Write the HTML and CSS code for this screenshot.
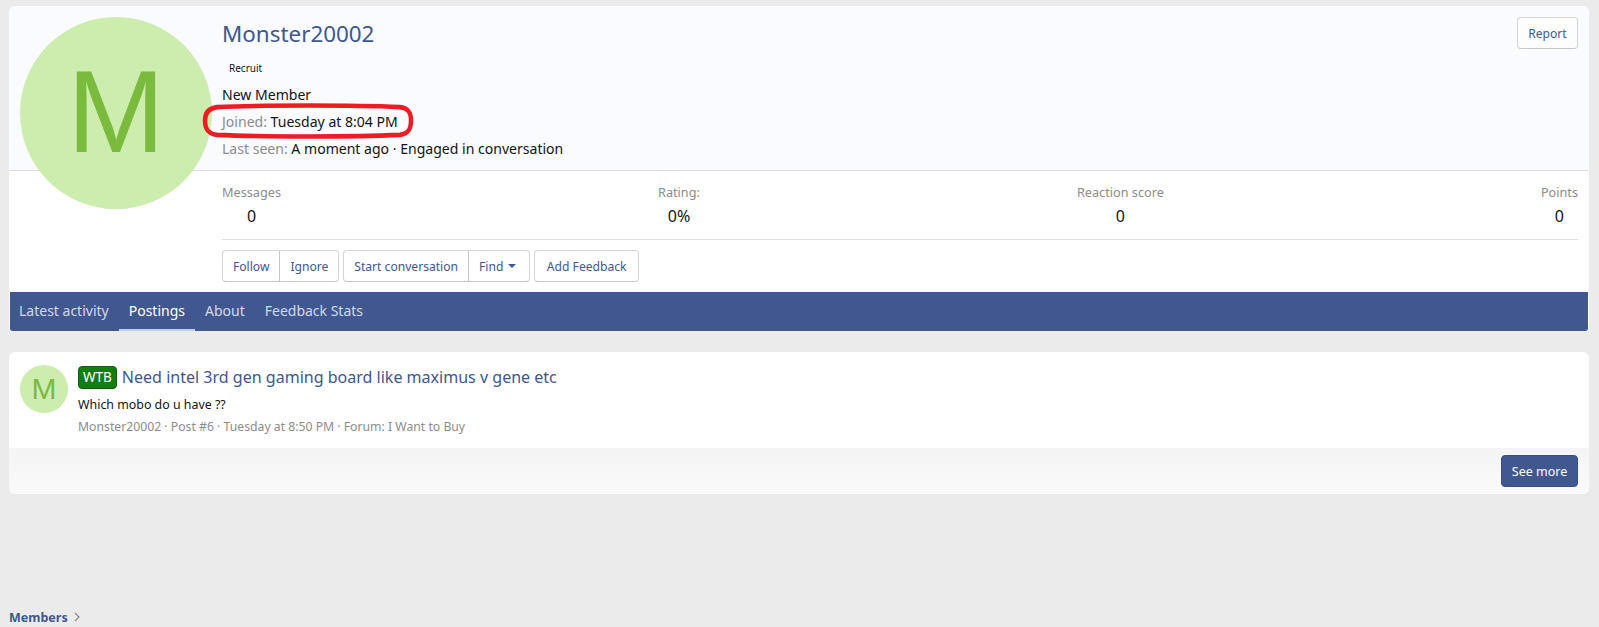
FILE: index.html
```html
<!DOCTYPE html>
<html lang="en">
<head>
<meta charset="utf-8">
<title>Monster20002</title>
<link rel="stylesheet" href="styles.css">
</head>
<body>
<main class="page">
  <section class="card profile">
    <div class="avatar avatar-lg">M</div>
    <div class="head">
      <div class="head-text">
        <h1 class="name">Monster20002</h1>
        <div class="rank">Recruit</div>
        <div class="line">New Member</div>
        <div class="line joined"><span class="muted">Joined:</span> Tuesday at 8:04 PM
          <svg class="oval" viewBox="0 0 210 33" preserveAspectRatio="none"><path d="M14 3 C60 1 150 1 197 3 C205 4 208 8 208 16 C208 25 205 29 197 30 C150 32 60 32 14 30 C6 29 2 25 2 16 C2 8 6 4 14 3 Z"/></svg>
        </div>
        <div class="line"><span class="muted">Last seen:</span> A moment ago · Engaged in conversation</div>
      </div>
      <a class="btn report">Report</a>
    </div>
    <div class="body">
      <div class="stats">
        <div class="stat"><div class="muted">Messages</div><div class="val">0</div></div>
        <div class="stat"><div class="muted">Rating:</div><div class="val">0%</div></div>
        <div class="stat"><div class="muted">Reaction score</div><div class="val">0</div></div>
        <div class="stat"><div class="muted">Points</div><div class="val">0</div></div>
      </div>
      <div class="actions">
        <div class="group"><a class="btn">Follow</a><a class="btn">Ignore</a></div>
        <div class="group"><a class="btn">Start conversation</a><a class="btn find">Find <i class="caret"></i></a></div>
        <a class="btn feedback">Add Feedback</a>
      </div>
    </div>
    <nav class="tabs">
      <a class="tab">Latest activity</a>
      <a class="tab active">Postings</a>
      <a class="tab">About</a>
      <a class="tab">Feedback Stats</a>
    </nav>
  </section>

  <section class="card posts">
    <div class="post">
      <div class="avatar avatar-sm">M</div>
      <div class="post-main">
        <div class="post-title"><span class="badge">WTB</span> Need intel 3rd gen gaming board like maximus v gene etc</div>
        <div class="post-body">Which mobo do u have ??</div>
        <div class="post-meta">Monster20002 · Post #6 · Tuesday at 8:50 PM · Forum: I Want to Buy</div>
      </div>
    </div>
    <div class="post-foot"><a class="btn primary">See more</a></div>
  </section>
</main>
<footer class="crumbs"><a class="crumb">Members</a><svg class="chev" viewBox="0 0 6 10"><path d="M1 1l4 4-4 4"/></svg></footer>
</body>
</html>
```

FILE: styles.css
```css
* { box-sizing: border-box; }
html, body { height: 100%; }
body {
  margin: 0;
  background: #ebebeb;
  font-family: "Noto Sans", "Open Sans", sans-serif;
  font-size: 14px;
  color: #141414;
  display: flex;
  flex-direction: column;
  overflow: hidden;
}
.page { flex: 1; padding: 6px 10px 0 9px; }
.card { background: #fff; border-radius: 6px; position: relative; overflow: hidden; }
.muted { color: #8c8c8c; }

.profile { height: 325px; display: flex; flex-direction: column; overflow: visible; }
.avatar {
  border-radius: 50%;
  background: #cdedaf;
  color: #7aba3d;
  font-family: "Liberation Sans", sans-serif;
  display: flex;
  align-items: center;
  justify-content: center;
  flex: none;
}
.avatar-lg {
  position: absolute;
  left: 11px;
  top: 11px;
  width: 192px;
  height: 192px;
  font-size: 117px;
  padding-bottom: 4px;
  z-index: 1;
}
.head {
  height: 165px;
  background: #fafbff;
  border-bottom: 1px solid #dfdfdf;
  border-radius: 6px 6px 0 0;
  margin-right: 1px;
  padding: 11px 10px 0 213px;
  display: flex;
  justify-content: space-between;
  align-items: flex-start;
}
.name { margin: 0; font-size: 22.4px; font-weight: 400; line-height: 33px; color: #40578f; }
.rank { font-size: 10px; line-height: 14px; margin: 11px 0 0 7px; color: #141414; }
.line { font-size: 14.05px; line-height: 27px; position: relative; }
.rank + .line { margin-top: 6px; }
.joined { width: max-content; }
.oval {
  position: absolute;
  left: -19px;
  top: -4px;
  width: 210px;
  height: 34px;
  overflow: visible;
  z-index: 2;
}
.oval path { fill: none; stroke: #ed1c24; stroke-width: 4.5; }

.btn {
  display: inline-flex;
  align-items: center;
  justify-content: center;
  height: 32px;
  padding: 0 10px;
  font-size: 12.1px;
  color: #40578f;
  background: #fff;
  border: 1px solid #d4d4d4;
  border-bottom-color: #c6c6c6;
  border-radius: 4px;
  white-space: nowrap;
}
.report { width: 61px; background: #fdfdfe; }
.find { padding-right: 13px; }
.feedback { padding: 0 11.5px; }

.body { flex: 1; padding: 11px 11px 0 213px; }
.stats {
  display: flex;
  justify-content: space-between;
  height: 58px;
  border-bottom: 1px solid #dfdfdf;
}
.stat { text-align: center; font-size: 12.7px; line-height: 20px; }
.val { font-size: 16px; line-height: 24px; margin-top: 2px; color: #141414; }
.actions { display: flex; gap: 4px; margin-top: 10px; }
.group { display: flex; }
.group .btn:first-child { border-radius: 4px 0 0 4px; border-right: 0; }
.group .btn:last-child { border-radius: 0 4px 4px 0; border-left: 1px solid #c6c6c6; }
.caret {
  display: inline-block;
  margin-left: 5px;
  border: 4px solid transparent;
  border-top: 4px solid #40578f;
  border-bottom: 0;
}

.tabs {
  height: 39px;
  background: #40578f;
  display: flex;
  margin: 0 1px;
  border-radius: 0 0 3px 3px;
}
.tab {
  padding: 0 10px;
  line-height: 37px;
  font-size: 14px;
  color: #d3daea;
  border-bottom: 2px solid transparent;
}
.tab:first-child { padding-left: 9px; }
.tab.active { color: #fff; border-bottom-color: #c0d0e6; }

.posts { margin-top: 21px; height: 142px; }
.post { display: flex; gap: 10px; padding: 13px 11px 0; height: 96px; }
.avatar-sm { width: 48px; height: 48px; font-size: 30px; }
.post-title { font-size: 16.05px; line-height: 24px; color: #40578f; display: flex; align-items: center; gap: 5px; }
.badge {
  background: #137c13;
  color: #fff;
  border: 1px solid #0d5f0d;
  border-radius: 4px;
  font-size: 13.5px;
  line-height: 21px;
  padding: 0 4px;
}
.post-body { font-size: 12.4px; line-height: 18px; margin-top: 7px; }
.post-meta { font-size: 12.23px; line-height: 18px; margin-top: 4px; color: #8c8c8c; }
.post-foot {
  height: 46px;
  background: linear-gradient(#f4f4f4, #fafafa);
  padding: 7px 11px 0 0;
  display: flex;
  justify-content: flex-end;
}
.btn.primary { background: #40578f; border-color: #38507f; color: #fff; width: 77px; font-size: 12.5px; }

.crumbs { height: 20px; padding-left: 9px; display: flex; align-items: center; gap: 6px; }
.crumb { font-size: 12.5px; font-weight: 700; color: #40578f; }
.chev { width: 6px; height: 10px; }
.chev path { fill: none; stroke: #8c8c8c; stroke-width: 1.2; }
```
